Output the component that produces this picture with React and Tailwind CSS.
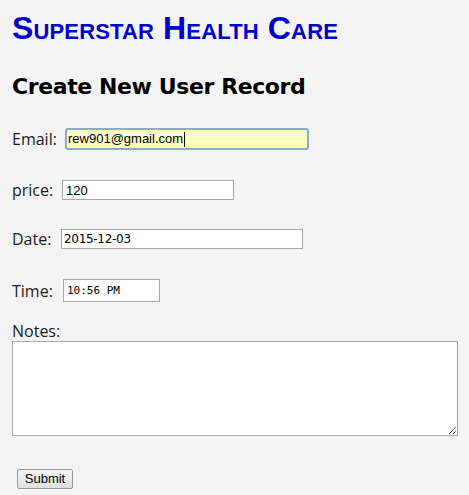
export default function App() {
  return (
    <div className="min-h-screen bg-[#f4f4f4] pl-3 pt-[6px] font-['Open_Sans',sans-serif] text-[16px] text-[#1a1a1a]">
      <h1 className="font-['Liberation_Sans',Arial,sans-serif] text-[32px] font-bold leading-[44px] tracking-[0.15px] text-[#0000cc] [font-variant:small-caps]">
        Superstar Health Care
      </h1>
      <h2 className="mt-[22px] font-['DejaVu_Sans',Verdana,sans-serif] text-[22px] font-bold leading-[30px] tracking-[-0.4px] text-black">
        Create New User Record
      </h2>

      <form className="mt-[26px]">
        <div className="flex h-[22px] items-center">
          <label className="w-[53px] leading-none">Email:</label>
          <div className="flex h-[22px] w-[244px] items-center rounded-[3px] border-2 border-[#8fa9cc] bg-[#ffffc2] px-[1px] font-['Liberation_Sans',Arial,sans-serif] text-[13px] text-black">
            <span>rew901@gmail.com</span>
            <span className="ml-[1px] h-[15px] w-px bg-black" />
          </div>
        </div>

        <div className="mt-[30px] flex h-[20px] items-center">
          <label className="w-[50px] leading-none">price:</label>
          <input
            type="text"
            defaultValue="120"
            className="h-[20px] w-[172px] border border-[#a9a9a9] bg-white px-[3px] font-['Liberation_Sans',Arial,sans-serif] text-[13px] text-black outline-none"
          />
        </div>

        <div className="mt-[29px] flex h-[20px] items-center">
          <label className="w-[49px] leading-none">Date:</label>
          <input
            type="text"
            defaultValue="2015-12-03"
            className="h-[20px] w-[242px] border border-[#a9a9a9] bg-white px-[2px] font-['DejaVu_Sans',Tahoma,sans-serif] text-[12px] tracking-[-0.3px] text-black outline-none"
          />
        </div>

        <div className="mt-[30px] flex h-[23px] items-center">
          <label className="w-[51px] leading-none">Time:</label>
          <input
            type="text"
            defaultValue="10:56 PM"
            className="h-[23px] w-[97px] border border-[#a9a9a9] bg-white px-[3px] font-['DejaVu_Sans_Mono',monospace] text-[11px] text-black outline-none"
          />
        </div>

        <div className="mt-[20px]">
          <label className="block leading-[19px]">Notes:</label>
          <textarea className="block h-[95px] w-[446px] resize border border-[#a9a9a9] bg-white outline-none" />
        </div>

        <div className="mt-[29px] pl-[5px]">
          <button
            type="button"
            className="h-[20px] w-[56px] rounded-[2px] border border-[#9a9a9a] bg-gradient-to-b from-[#f6f6f6] to-[#dedede] font-['Liberation_Sans',Arial,sans-serif] text-[13px] leading-none text-black"
          >
            Submit
          </button>
        </div>
      </form>
    </div>
  );
}
